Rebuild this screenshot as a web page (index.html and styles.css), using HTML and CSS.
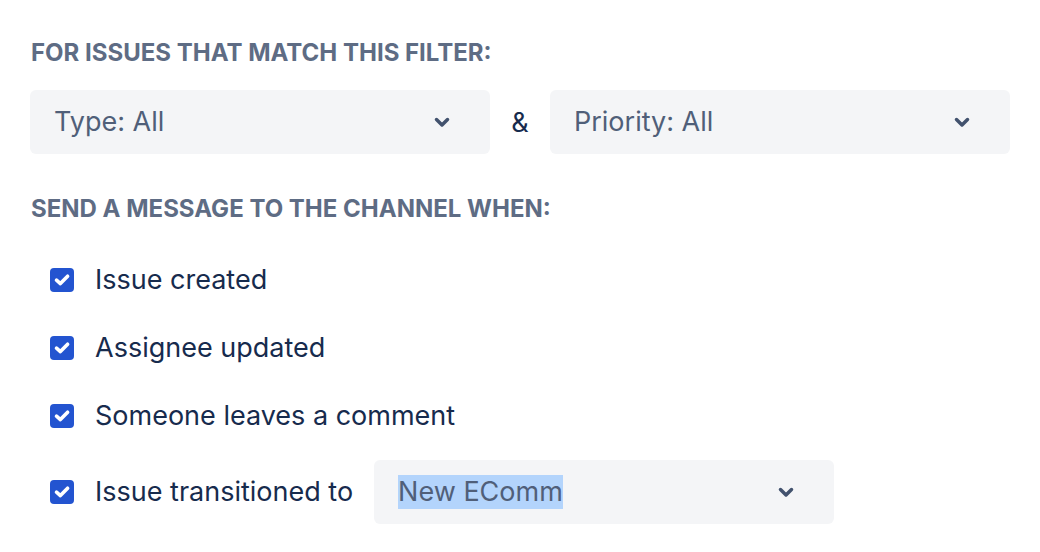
FILE: index.html
```html
<!DOCTYPE html>
<html lang="en">
<head>
  <meta charset="UTF-8" />
  <meta name="viewport" content="width=device-width, initial-scale=1.0" />
  <title>Channel notifications</title>
  <link rel="stylesheet" href="styles.css">
</head>
<body>
  <div class="settings">
    <h2 class="section-title">For issues that match this filter:</h2>

    <div class="filters">
      <div class="select">
        <span class="select-value">Type: All</span>
        <svg class="chevron" width="16" height="11" viewBox="0 0 16 11"><path d="M2.5 2.5 L8 8 L13.5 2.5" /></svg>
      </div>
      <span class="amp">&amp;</span>
      <div class="select">
        <span class="select-value">Priority: All</span>
        <svg class="chevron" width="16" height="11" viewBox="0 0 16 11"><path d="M2.5 2.5 L8 8 L13.5 2.5" /></svg>
      </div>
    </div>

    <h2 class="section-title">Send a message to the channel when:</h2>

    <ul class="events">
      <li class="event">
        <span class="checkbox"><svg width="18" height="18" viewBox="0 0 18 18"><path d="M3.5 9.2 L7.4 12.6 L14.6 5.2" /></svg></span>
        <span class="event-label">Issue created</span>
      </li>
      <li class="event">
        <span class="checkbox"><svg width="18" height="18" viewBox="0 0 18 18"><path d="M3.5 9.2 L7.4 12.6 L14.6 5.2" /></svg></span>
        <span class="event-label">Assignee updated</span>
      </li>
      <li class="event">
        <span class="checkbox"><svg width="18" height="18" viewBox="0 0 18 18"><path d="M3.5 9.2 L7.4 12.6 L14.6 5.2" /></svg></span>
        <span class="event-label">Someone leaves a comment</span>
      </li>
      <li class="event">
        <span class="checkbox"><svg width="18" height="18" viewBox="0 0 18 18"><path d="M3.5 9.2 L7.4 12.6 L14.6 5.2" /></svg></span>
        <span class="event-label">Issue transitioned to</span>
        <div class="select">
          <span class="select-value selected">New EComm</span>
          <svg class="chevron" width="16" height="11" viewBox="0 0 16 11"><path d="M2.5 2.5 L8 8 L13.5 2.5" /></svg>
        </div>
      </li>
    </ul>
  </div>
</body>
</html>
```

FILE: styles.css
```css
* {
  box-sizing: border-box;
}

body {
  margin: 0;
  background: #ffffff;
  font-family: Inter, "Noto Sans", Arial, sans-serif;
  color: #172b4d;
}

.settings {
  padding: 38px 30px 0;
}

.section-title {
  margin: 0 0 0 1px;
  font-size: 24px;
  line-height: 30px;
  font-weight: 700;
  text-transform: uppercase;
  color: #5e6c84;
}

.filters {
  display: flex;
  align-items: center;
  margin: 22px 0 40px;
}

.select {
  width: 460px;
  height: 64px;
  display: flex;
  align-items: center;
  justify-content: space-between;
  padding: 0 40px 0 24px;
  border-radius: 6px;
  background: #f4f5f7;
}

.select-value {
  font-size: 27px;
  line-height: 34px;
  color: #505f79;
}

.selected {
  background: #b3d4fc;
}

.chevron path {
  fill: none;
  stroke: #42526e;
  stroke-width: 3.5;
  stroke-linecap: round;
  stroke-linejoin: round;
}

.amp {
  width: 60px;
  text-align: center;
  font-size: 27px;
  color: #172b4d;
}

.events {
  list-style: none;
  margin: 22px 0 0;
  padding: 0 0 0 20px;
}

.event {
  display: flex;
  align-items: center;
  height: 68px;
}

.event:last-child {
  height: 84px;
}

.checkbox {
  width: 24px;
  height: 24px;
  display: flex;
  align-items: center;
  justify-content: center;
  border-radius: 4px;
  background: #2354d0;
  flex-shrink: 0;
}

.checkbox path {
  fill: none;
  stroke: #ffffff;
  stroke-width: 3.6;
  stroke-linecap: round;
  stroke-linejoin: round;
}

.event-label {
  margin-left: 21px;
  font-size: 27px;
  line-height: 34px;
  color: #172b4d;
}

.event .select {
  margin-left: 21px;
}
```
